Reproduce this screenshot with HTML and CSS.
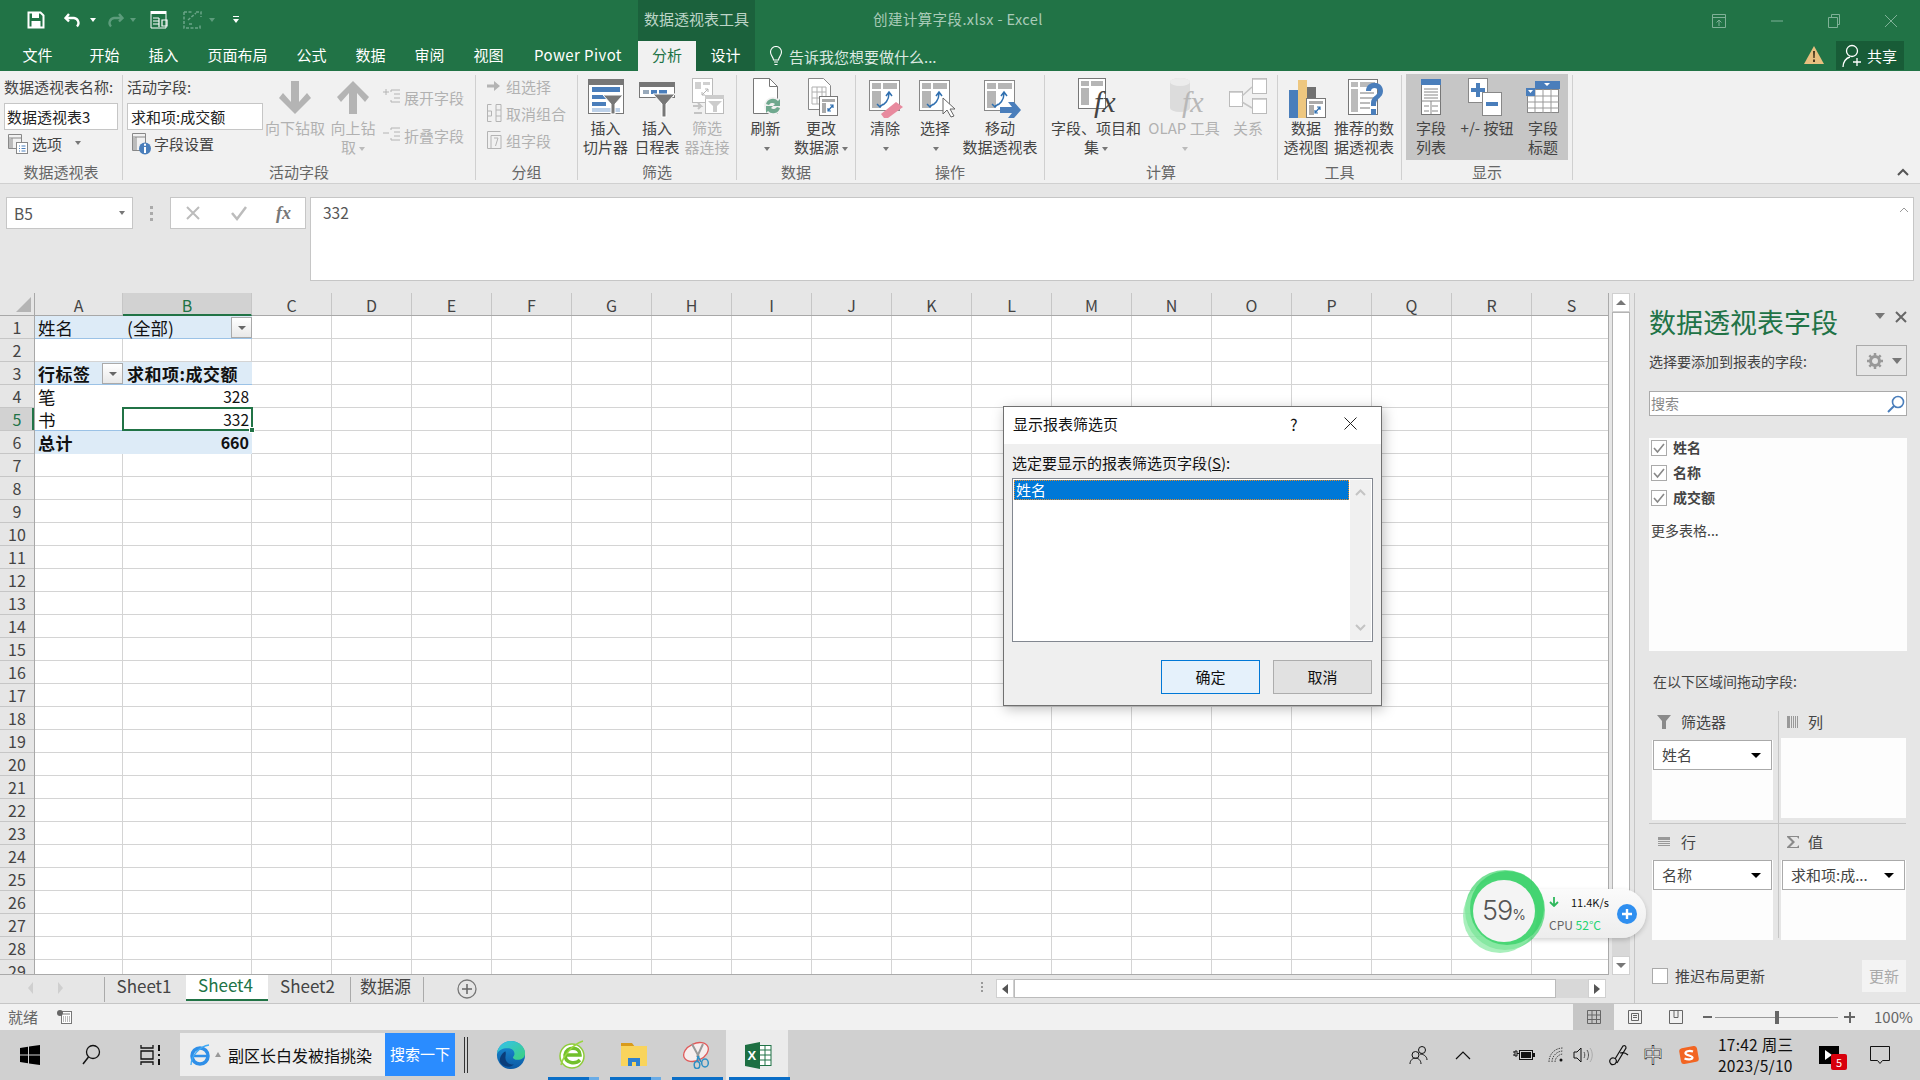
FILE: index.html
```html
<!DOCTYPE html>
<html lang="zh-CN">
<head>
<meta charset="utf-8">
<title>创建计算字段.xlsx - Excel</title>
<link rel="stylesheet" href="styles.css">
</head>
<body>
<div class="app">
  <header class="titlebar">
    <div class="qat">
      <svg width="18" height="18" viewBox="0 0 18 18"><path d="M1.5 1.5h12l3 3v12h-15z" fill="none" stroke="#fff" stroke-width="2"/><rect x="5" y="2" width="7" height="5" fill="#fff"/><rect x="4.500" y="10" width="9" height="6" fill="#fff"/></svg>
      <svg class="q-undo" width="20" height="18" viewBox="0 0 20 18"><path d="M5 3 1.500 7 5 10.500M2 7h8a5 5 0 0 1 3 8.500" fill="none" stroke="#fff" stroke-width="2.400"/></svg>
      <i class="qcaret"></i>
      <svg class="q-redo" width="20" height="18" viewBox="0 0 20 18"><path d="M15 3l3.500 4L15 10.500M18 7h-8a5 5 0 0 0-3 8.500" fill="none" stroke="#5d9c7c" stroke-width="2.400"/></svg>
      <i class="qcaret dim"></i>
      <svg class="q-form" width="20" height="20" viewBox="0 0 20 20"><rect x="1.500" y="1" width="16" height="3" fill="#fff"/><path d="M2 4v14h15V4" fill="none" stroke="#fff"/><path d="M4 8h6M4 11h6M4 14h6M10 8v9M13 10h5v6h-5z" stroke="#fff" fill="none" stroke-width="1.200"/></svg>
      <svg class="q-dash" width="20" height="18" viewBox="0 0 20 18"><path d="M1 1h8M13 1h5v5M1 1v16h16v-4M5 9l8-7M6 13h4" fill="none" stroke="#6aa588" stroke-width="1.500" stroke-dasharray="3 1.500"/></svg>
      <i class="qcaret dim"></i>
      <svg class="q-more" width="8" height="10" viewBox="0 0 8 10"><path d="M1 1.500h6" stroke="#fff"/><path d="M1 4h6L4 8z" fill="#fff"/></svg>
    </div>
    <div class="ctx-title">数据透视表工具</div>
    <div class="doc-title">创建计算字段.xlsx - Excel</div>
    <div class="winctl">
      <svg width="16" height="16" viewBox="0 0 16 16"><path d="M1.500 1.500h13v13h-13zM1.500 4.500h13M8 13V7M5.500 9.500 8 7l2.500 2.500" fill="none" stroke="#7fb197"/></svg>
      <svg width="14" height="16" viewBox="0 0 14 16"><path d="M1 8h12" stroke="#7fb197"/></svg>
      <svg width="14" height="16" viewBox="0 0 14 16"><path d="M1.500 4.500h9v10h-9zM4.500 4.500v-3h8v10h-2" fill="none" stroke="#7fb197"/></svg>
      <svg width="14" height="16" viewBox="0 0 14 16"><path d="M1 2l12 12M13 2 1 14" stroke="#7fb197"/></svg>
    </div>
  </header>
  <nav class="tabs">
    <span class="tab w75">文件</span>
    <span class="tab w59">开始</span>
    <span class="tab w59">插入</span>
    <span class="tab w89">页面布局</span>
    <span class="tab w59">公式</span>
    <span class="tab w59">数据</span>
    <span class="tab w59">审阅</span>
    <span class="tab w59">视图</span>
    <span class="tab w120 pp">Power Pivot</span>
    <span class="tab w58 active">分析</span>
    <span class="tab w59 ctx">设计</span>
    <span class="tellme">
      <svg width="14" height="21" viewBox="0 0 14 21"><path d="M4.500 14c0-3-3-4-3-8a5.500 5.500 0 0 1 11 0c0 4-3 5-3 8zM5 16h4M5.500 18.500h3" fill="none" stroke="#fff" stroke-width="1.100"/></svg>
      告诉我您想要做什么...
    </span>
    <span class="tab-right">
      <svg width="20" height="18" viewBox="0 0 20 18"><path d="M10 0 20 18H0z" fill="#e8bf7f"/><path d="M9 5h2l-.300 7H9.300zM9 13.500h2V16H9z" fill="#4a3a1f"/></svg>
      <span class="share">
        <svg width="20" height="24" viewBox="0 0 20 24"><circle cx="10" cy="7" r="5.500" fill="none" stroke="#fff" stroke-width="1.300"/><path d="M1 23c0-5 3-9 7-10M11 18h8M15 14v8" fill="none" stroke="#fff" stroke-width="1.300"/></svg>
        共享
      </span>
    </span>
  </nav>

  <section class="ribbon">
    <div class="group g1">
      <div class="gbody stack-a">
        <div class="lbl">数据透视表名称:</div>
        <div class="rinput">数据透视表3</div>
        <div class="irow">
          <svg width="22" height="21" viewBox="0 0 22 21"><path d="M1.500 1.500h13v14h-13zM1.500 5h13M5 5v10" fill="none" stroke="#888"/><rect x="2" y="6" width="3" height="9" fill="#bbb"/><rect x="9.500" y="9.500" width="11" height="11" fill="#fff" stroke="#888"/><path d="M12 13h1M12 15.500h1M12 18h1M14.500 13h4M14.500 15.500h4M14.500 18h4" stroke="#4a7ebb"/></svg>
          <span>选项</span><i class="caret c-opt"></i>
        </div>
      </div>
      <div class="glabel">数据透视表</div>
    </div>

    <div class="group g2">
      <div class="gbody row">
        <div class="stack-b">
          <div class="lbl">活动字段:</div>
          <div class="rinput wide">求和项:成交额</div>
          <div class="irow in">
            <svg width="20" height="23" viewBox="0 0 20 23"><path d="M1.500 1.500h13v17h-13zM1.500 5h13M5 5v13" fill="none" stroke="#888"/><rect x="2" y="6" width="3" height="12" fill="#bbb"/><circle cx="14" cy="16.500" r="6" fill="#4a7ebb"/><path d="M13 15h2v6h-2zM13 11.800h2v2h-2z" fill="#fff"/></svg>
            <span>字段设置</span>
          </div>
        </div>
        <div class="big off w60">
          <svg class="ic" width="44" height="43" viewBox="0 0 44 43"><path d="M18 6h8v21l8-9 4 5-16 16L6 23l4-5 8 9z" fill="#b4b4b4"/></svg>
          <span>向下钻取</span>
        </div>
        <div class="big off w56">
          <svg class="ic" width="44" height="43" viewBox="0 0 44 43"><path d="M18 39h8V18l8 9 4-5L22 6 6 22l4 5 8-9z" fill="#b4b4b4"/></svg>
          <span>向上钻<br>取<i class="caret"></i></span>
        </div>
        <div class="stack-c off">
          <div class="irow2">
            <svg width="18" height="18" viewBox="0 0 18 18"><path d="M0 4h6M3 1v6M8 2h9M11 6h6M11 10h6M8 14h9M8 2v2M8 12v2" stroke="#b4b4b4" fill="none"/></svg>
            <span>展开字段</span>
          </div>
          <div class="irow2 second">
            <svg width="18" height="18" viewBox="0 0 18 18"><path d="M0 7h6M8 2h9M11 6h6M11 10h6M8 14h9M8 2v2M8 12v2" stroke="#b4b4b4" fill="none"/></svg>
            <span>折叠字段</span>
          </div>
        </div>
      </div>
      <div class="glabel">活动字段</div>
    </div>

    <div class="group g3">
      <div class="gbody stack-d off">
        <div class="irow3">
          <svg width="16" height="16" viewBox="0 0 16 16"><path d="M1 6.500h7V3l6 5-6 5V9.500H1z" fill="#b4b4b4"/></svg>
          <span>组选择</span>
        </div>
        <div class="irow3">
          <svg width="16" height="20" viewBox="0 0 16 20"><path d="M5.500 1.500h-4v17h4M10 1.500h5v17h-5zM10 7h5M10 13h5M1.500 8h4v5h-4z" fill="none" stroke="#b4b4b4"/></svg>
          <span>取消组合</span>
        </div>
        <div class="irow3">
          <svg width="16" height="20" viewBox="0 0 16 20"><path d="M1.500 1.500h13M1.500 1.500v17h4M5 5.500h10v13H5z" fill="none" stroke="#b4b4b4"/><path d="M8 8h4l-2.500 8" fill="none" stroke="#b4b4b4"/></svg>
          <span>组字段</span>
        </div>
      </div>
      <div class="glabel">分组</div>
    </div>

    <div class="group g4">
      <div class="gbody row pl1">
        <div class="big w53">
          <svg class="ic" width="44" height="43" viewBox="0 0 44 43"><rect x="4.500" y="4.500" width="35" height="34" fill="#fff" stroke="#777"/><rect x="4" y="4" width="36" height="6" fill="#777"/><rect x="8" y="12" width="28" height="5" fill="#4a7ebb"/><rect x="8" y="20" width="14" height="4" fill="#4a7ebb"/><rect x="8" y="27" width="14" height="4" fill="#4a7ebb"/><rect x="8" y="33" width="28" height="4" fill="#bcd0e8"/><path d="M19 20h20l-8 9v10h-4V29z" fill="#777" stroke="#fff"/></svg>
          <span>插入<br>切片器</span>
        </div>
        <div class="big w50">
          <svg class="ic" width="44" height="43" viewBox="0 0 44 43"><rect x="4.500" y="7.500" width="35" height="15" fill="#fff" stroke="#777"/><rect x="4" y="7" width="36" height="5" fill="#777"/><rect x="8" y="15" width="6" height="4" fill="#9ab"/><rect x="16" y="15" width="6" height="4" fill="#4a7ebb"/><rect x="24" y="15" width="8" height="4" fill="#4a7ebb"/><path d="M18 19h22l-9 10v13h-4V29z" fill="#777" stroke="#fff"/></svg>
          <span>插入<br>日程表</span>
        </div>
        <div class="big off w50">
          <svg class="ic" width="44" height="43" viewBox="0 0 44 43"><rect x="7.500" y="3.500" width="20" height="24" fill="#fff" stroke="#bbb"/><path d="M10 7h6v7h-6zM18 7h7v3h-7z" fill="#d0d0d0"/><path d="M17 20l6-6M20 14h3v3M17 17v3h3" fill="none" stroke="#b4b4b4"/><rect x="20.500" y="20.500" width="18" height="18" fill="#fff" stroke="#bbb"/><rect x="20" y="20" width="19" height="4" fill="#ccc"/><path d="M23 26h14l-5 5v6h-4v-6z" fill="#ccc"/><path d="M8 31h8l-3-3M16 31l-3 3M9 38h8" fill="none" stroke="#c4c4c4" stroke-width="2"/></svg>
          <span>筛选<br>器连接</span>
        </div>
      </div>
      <div class="glabel">筛选</div>
    </div>

    <div class="group g5">
      <div class="gbody row">
        <div class="big w57">
          <svg class="ic" width="44" height="43" viewBox="0 0 44 43"><path d="M9.500 3.500h16l8 8v27h-24z" fill="#fff" stroke="#777"/><path d="M25.500 3.500v8h8" fill="none" stroke="#777"/><circle cx="29" cy="31" r="9" fill="#f1f1f1"/><path d="M22 29a7 7 0 0 1 12-3l2-2v7h-7l2-2a4 4 0 0 0-6 1zM36 33a7 7 0 0 1-12 3l-2 2v-7h7l-2 2a4 4 0 0 0 6-1z" fill="#6fa88e"/></svg>
          <span>刷新<br><i class="caret"></i></span>
        </div>
        <div class="big w54">
          <svg class="ic" width="44" height="43" viewBox="0 0 44 43"><path d="M9.500 3.500h15l7 7v24h-22z" fill="#fff" stroke="#888"/><path d="M13 12h14v17H13zM13 17h14M13 23h14M18 12v17M23 12v17" fill="none" stroke="#b0b0b0"/><rect x="20.500" y="21.500" width="18" height="19" fill="#fff" stroke="#777"/><path d="M23 24h13v3H23zM23 28h4v10h-4z" fill="#aaa"/><path d="M29 36l5-6M31 30h3v3M29 33v3h3" fill="none" stroke="#2f6fb0" stroke-width="1.200"/></svg>
          <span>更改<br>数据源<i class="caret"></i></span>
        </div>
      </div>
      <div class="glabel">数据</div>
    </div>

    <div class="group g6">
      <div class="gbody row">
        <div class="big w58">
          <svg class="ic" width="44" height="43" viewBox="0 0 44 43"><rect x="6.500" y="5.500" width="30" height="30" fill="#fff" stroke="#888"/><path d="M9 8h9v6H9zM20 8h14v6H20zM9 16h9v17H9z" fill="#b5b5b5"/><path d="M17 31c5-1 9-6 9-13M23 21l3-4 3 4M14 29l3 3 3-3" fill="none" stroke="#2f6fb0" stroke-width="1.500"/><path d="M18 39 33 27l7 5-15 11h-4z" fill="#e88a9e"/></svg>
          <span>清除<br><i class="caret"></i></span>
        </div>
        <div class="big w42">
          <svg class="ic" width="44" height="43" viewBox="0 0 44 43"><rect x="6.500" y="5.500" width="30" height="30" fill="#fff" stroke="#888"/><path d="M9 8h9v6H9zM20 8h14v6H20zM9 16h9v17H9z" fill="#b5b5b5"/><path d="M17 31c5-1 9-6 9-13M23 21l3-4 3 4M14 29l3 3 3-3" fill="none" stroke="#2f6fb0" stroke-width="1.500"/><path d="M30 23v16l4-4 4 7 3-1-4-7h5z" fill="#fff" stroke="#666"/></svg>
          <span>选择<br><i class="caret"></i></span>
        </div>
        <div class="big w88">
          <svg class="ic" width="44" height="43" viewBox="0 0 44 43"><rect x="6.500" y="5.500" width="30" height="30" fill="#fff" stroke="#888"/><path d="M9 8h9v6H9zM20 8h14v6H20zM9 16h9v17H9z" fill="#b5b5b5"/><path d="M17 31c5-1 9-6 9-13M23 21l3-4 3 4M14 29l3 3 3-3" fill="none" stroke="#2f6fb0" stroke-width="1.500"/><path d="M22 32h12l-4-5h6l7 8-7 8h-6l4-5H22z" fill="#4a7ebb"/></svg>
          <span>移动<br>数据透视表</span>
        </div>
      </div>
      <div class="glabel">操作</div>
    </div>

    <div class="group g7">
      <div class="gbody row">
        <div class="big w102">
          <svg class="ic" width="44" height="43" viewBox="0 0 44 43"><rect x="4.500" y="3.500" width="27" height="30" fill="#fff" stroke="#777"/><path d="M7 6h8v5H7zM17 6h12v5H17zM7 13h8v17H7z" fill="#b5b5b5"/><text x="20" y="37" class="fxbig">fx</text></svg>
          <span>字段、项目和<br>集<i class="caret"></i></span>
        </div>
        <div class="big off w74">
          <svg class="ic" width="44" height="43" viewBox="0 0 44 43"><path d="M8 7a10 4 0 0 1 20 0v26a10 4 0 0 1-20 0z" fill="#dcdcdc"/><ellipse cx="18" cy="7" rx="10" ry="4" fill="#ececec"/><text x="20" y="37" class="fxbig dim">fx</text></svg>
          <span>OLAP 工具<br><i class="caret"></i></span>
        </div>
        <div class="big off w54">
          <svg class="ic" width="44" height="43" viewBox="0 0 44 43"><rect x="3.500" y="16.500" width="13" height="15" fill="#fff" stroke="#bbb"/><rect x="26.500" y="3.500" width="14" height="15" fill="#fff" stroke="#bbb"/><rect x="26.500" y="23.500" width="14" height="15" fill="#fff" stroke="#bbb"/><path d="M16 21l10-9M16 27l10 6M4 17h12M27 4h13M27 24h13" stroke="#c4c4c4" stroke-width="1.500" fill="none"/></svg>
          <span>关系</span>
        </div>
      </div>
      <div class="glabel">计算</div>
    </div>

    <div class="group g8">
      <div class="gbody row">
        <div class="big w56">
          <svg class="ic" width="44" height="43" viewBox="0 0 44 43"><rect x="5" y="15" width="9" height="28" fill="#4a7ebb"/><rect x="14" y="5" width="9" height="38" fill="#eec77f"/><rect x="23" y="12" width="9" height="12" fill="#707070"/><rect x="22.500" y="23.500" width="19" height="19" fill="#fff" stroke="#777"/><path d="M25 26h14v3H25zM25 30h5v10h-5z" fill="#aaa"/><path d="M31 38l5-6M33 32h3v3M31 35v3h3" fill="none" stroke="#2f6fb0" stroke-width="1.200"/></svg>
          <span>数据<br>透视图</span>
        </div>
        <div class="big w60">
          <svg class="ic" width="44" height="43" viewBox="0 0 44 43"><rect x="6.500" y="4.500" width="29" height="35" fill="#fff" stroke="#777"/><path d="M9 7h7v5H9zM18 7h15v5H18zM9 14h7v23H9z" fill="#bbb"/><path d="M18 18h14M18 23h14M18 28h10M18 33h10" stroke="#bbb" stroke-width="2"/><path d="M24 16c0-11 17-11 17 0 0 7-7 7-7 13v2h-5v-3c0-7 7-7 7-12 0-4-7-4-7 0z" fill="#4a7ebb"/><rect x="29" y="34" width="5" height="6" fill="#4a7ebb"/></svg>
          <span>推荐的数<br>据透视表</span>
        </div>
      </div>
      <div class="glabel">工具</div>
    </div>

    <div class="group g9">
      <div class="gbody row shown">
        <div class="big w50">
          <svg class="ic" width="44" height="43" viewBox="0 0 44 43"><rect x="12.500" y="4.500" width="19" height="35" fill="#fff" stroke="#777"/><rect x="12" y="4" width="20" height="6" fill="#4a7ebb"/><path d="M15 14h14M15 17h14M15 20h14M15 23h14M12 26h20M15 31h5M23 31h6M15 36h5M23 36h6M22 26v13" stroke="#888" fill="none"/></svg>
          <span>字段<br>列表</span>
        </div>
        <div class="big w62">
          <svg class="ic" width="44" height="43" viewBox="0 0 44 43"><rect x="3.500" y="3.500" width="19" height="24" fill="#fff" stroke="#888"/><path d="M11 8h4v5h5v4h-5v5h-4v-5H6v-4h5z" fill="#4a7ebb"/><rect x="17.500" y="17.500" width="19" height="23" fill="#fff" stroke="#888"/><rect x="21" y="27" width="12" height="4" fill="#4a7ebb"/></svg>
          <span>+/- 按钮</span>
        </div>
        <div class="big w50">
          <svg class="ic" width="44" height="43" viewBox="0 0 44 43"><rect x="6.500" y="14.500" width="31" height="23" fill="#fff" stroke="#888"/><path d="M6 21h32M6 27h32M6 33h32M14 14v24M22 14v24M30 14v24" stroke="#999"/><rect x="14" y="6" width="25" height="8" fill="#4a7ebb"/><rect x="5" y="13" width="9" height="8" fill="#4a7ebb"/><path d="M23 8h6l-3 3zM7 15h5l-2.500 3z" fill="#fff"/></svg>
          <span>字段<br>标题</span>
        </div>
      </div>
      <div class="glabel">显示</div>
    </div>

    <svg class="collapse" width="12" height="8" viewBox="0 0 12 8"><path d="M1 7l5-5 5 5" fill="none" stroke="#555" stroke-width="2"/></svg>
  </section>

  <section class="formula">
    <div class="namebox"><span>B5</span><i class="caret"></i></div>
    <div class="fdots"><i></i><i></i><i></i></div>
    <div class="fxbox">
      <svg width="18" height="18" viewBox="0 0 18 18"><path d="M3 3l12 12M15 3 3 15" stroke="#bcbcbc" stroke-width="2"/></svg>
      <svg width="18" height="18" viewBox="0 0 18 18"><path d="M2 9l5 6L16 3" fill="none" stroke="#bcbcbc" stroke-width="2.500"/></svg>
      <span class="fxt">fx</span>
    </div>
    <div class="finput">332<svg class="fup" width="10" height="6" viewBox="0 0 10 6"><path d="M1 5l4-4 4 4" fill="none" stroke="#999"/></svg></div>
  </section>

  <main class="main">
    <div class="sheetarea">
      <div class="sheetrow">
        <div class="sheet">
          <div class="colhead">
            <div class="corner"><i></i></div>
            <span class="ca">A</span><span class="cb sel">B</span>
            <span>C</span><span>D</span><span>E</span><span>F</span><span>G</span><span>H</span><span>I</span><span>J</span><span>K</span><span>L</span><span>M</span><span>N</span><span>O</span><span>P</span><span>Q</span><span>R</span><span>S</span>
          </div>
          <div class="body">
            <div class="rowhead">
              <span>1</span><span>2</span><span>3</span><span>4</span><span class="sel">5</span><span>6</span><span>7</span><span>8</span><span>9</span><span>10</span><span>11</span><span>12</span><span>13</span><span>14</span><span>15</span><span>16</span><span>17</span><span>18</span><span>19</span><span>20</span><span>21</span><span>22</span><span>23</span><span>24</span><span>25</span><span>26</span><span>27</span><span>28</span><span>29</span>
            </div>
            <div class="col ca">
              <div class="cell hd">姓名</div>
              <div class="cell"></div>
              <div class="cell hd bold">行标签<span class="fbtn"><i></i></span></div>
              <div class="cell plain">笔</div>
              <div class="cell plain hd-line">书</div>
              <div class="cell tot bold">总计</div>
            </div>
            <div class="col cb">
              <div class="cell hd">(全部)<span class="fbtn"><i></i></span></div>
              <div class="cell"></div>
              <div class="cell hd bold">求和项:成交额</div>
              <div class="cell plain num">328</div>
              <div class="cell plain num hd-line active">332</div>
              <div class="cell tot bold num">660</div>
            </div>
            <div class="col"></div><div class="col"></div><div class="col"></div><div class="col"></div><div class="col"></div><div class="col"></div><div class="col"></div><div class="col"></div><div class="col"></div><div class="col"></div><div class="col"></div><div class="col"></div><div class="col"></div><div class="col"></div><div class="col"></div><div class="col"></div><div class="col"></div>
          </div>
        </div>
        <div class="vscroll">
          <div class="sbtn"><i class="up"></i></div>
          <div class="vthumb"></div>
          <div class="sbtn"><i class="down"></i></div>
        </div>
      </div>
      <div class="sheettabs">
        <div class="navarrows">
          <svg width="8" height="14" viewBox="0 0 8 14"><path d="M6 1 1 7l5 6z" fill="#cfcfcf"/></svg>
          <svg width="8" height="14" viewBox="0 0 8 14"><path d="M2 1l5 6-5 6z" fill="#cfcfcf"/></svg>
        </div>
        <span class="stab">Sheet1</span>
        <span class="stab on">Sheet4</span>
        <span class="stab">Sheet2</span>
        <span class="stab narrow">数据源</span>
        <svg class="addsheet" width="20" height="20" viewBox="0 0 20 20"><circle cx="10" cy="10" r="9" fill="none" stroke="#777" stroke-width="1.300"/><path d="M10 5v10M5 10h10" stroke="#666" stroke-width="1.500"/></svg>
        <div class="hdots"><i></i><i></i><i></i></div>
        <div class="hscroll">
          <div class="hbtn"><i class="left"></i></div>
          <div class="hthumb"></div>
          <div class="hbtn"><i class="right"></i></div>
        </div>
      </div>
    </div>

    <aside class="pane">
      <div class="pane-head">
        <h1>数据透视表字段</h1>
        <i class="pcaret"></i>
        <svg width="12" height="12" viewBox="0 0 12 12"><path d="M1 1l10 10M11 1 1 11" stroke="#666" stroke-width="2"/></svg>
      </div>
      <div class="pane-sub">
        <span>选择要添加到报表的字段:</span>
        <div class="gearbox">
          <svg width="16" height="16" viewBox="0 0 16 16"><circle cx="8" cy="8" r="4.500" fill="none" stroke="#999" stroke-width="3"/><path d="M8 0v3M8 13v3M0 8h3M13 8h3M2.300 2.300l2 2M11.700 11.700l2 2M13.700 2.300l-2 2M4.300 11.700l-2 2" stroke="#999" stroke-width="2.500"/></svg>
          <i class="pcaret"></i>
        </div>
      </div>
      <div class="psearch">
        <span>搜索</span>
        <svg width="18" height="18" viewBox="0 0 18 18"><circle cx="11" cy="7" r="5.500" fill="none" stroke="#4a7ebb" stroke-width="1.600"/><path d="M7 11l-6 6" stroke="#4a7ebb" stroke-width="2"/></svg>
      </div>
      <div class="plist">
        <label class="pitem"><span class="chk"><svg width="12" height="12" viewBox="0 0 12 12"><path d="M1 6l3.500 4L11 2" fill="none" stroke="#888" stroke-width="1.600"/></svg></span>姓名</label>
        <label class="pitem"><span class="chk"><svg width="12" height="12" viewBox="0 0 12 12"><path d="M1 6l3.500 4L11 2" fill="none" stroke="#888" stroke-width="1.600"/></svg></span>名称</label>
        <label class="pitem"><span class="chk"><svg width="12" height="12" viewBox="0 0 12 12"><path d="M1 6l3.500 4L11 2" fill="none" stroke="#888" stroke-width="1.600"/></svg></span>成交额</label>
        <div class="pmore">更多表格...</div>
      </div>
      <div class="pdrag">在以下区域间拖动字段:</div>
      <div class="zones">
        <div class="zone z-l z-t">
          <div class="zhead"><svg width="14" height="14" viewBox="0 0 14 14"><path d="M0 0h14L9 6v8H5V6z" fill="#8a8a8a"/></svg><span>筛选器</span></div>
          <div class="zbox"><div class="chip">姓名<i></i></div></div>
        </div>
        <div class="zone z-t">
          <div class="zhead"><svg width="14" height="14" viewBox="0 0 14 14"><path d="M1 1h3v12H1zM5 1h1v12H5zM7 1h1v12H7zM9 1h1v12H9zM11 1h1v12h-1z" fill="#999"/></svg><span>列</span></div>
          <div class="zbox"></div>
        </div>
        <div class="zone z-l z-b">
          <div class="zhead"><svg width="14" height="14" viewBox="0 0 14 14"><path d="M1 2h12v3H1zM1 6h12v1H1zM1 8h12v1H1zM1 10h12v1H1z" fill="#999"/></svg><span>行</span></div>
          <div class="zbox"><div class="chip">名称<i></i></div></div>
        </div>
        <div class="zone z-b">
          <div class="zhead"><svg width="14" height="14" viewBox="0 0 14 14"><path d="M1 1h12v3L11 2H4l5 5-5 5h7l2-2v3H1v-1l5-5-5-5z" fill="#8a8a8a"/></svg><span>值</span></div>
          <div class="zbox"><div class="chip">求和项:成...<i></i></div></div>
        </div>
      </div>
      <div class="pfoot">
        <span class="chk big-chk"></span>
        <span class="defer">推迟布局更新</span>
        <span class="update">更新</span>
      </div>
    </aside>
  </main>

  <footer class="statusbar">
    <span class="ready">就绪</span>
    <svg class="macro" width="15" height="14" viewBox="0 0 15 14"><rect x="4.500" y="1.500" width="10" height="12" fill="#fff" stroke="#777"/><circle cx="3" cy="3" r="3" fill="#666"/><path d="M6 4h7M6 7h1M8 7h1M10 7h1M12 7h1M6 9h1M8 9h1M10 9h1M12 9h1M6 11h1M8 11h1M10 11h1M12 11h1" stroke="#777"/></svg>
    <div class="views">
      <span class="vbtn on"><svg width="14" height="14" viewBox="0 0 14 14"><path d="M.5.5h13v13H.5zM5 .5v13M9.500.5v13M.5 5h13M.5 9.500h13" fill="none" stroke="#666"/></svg></span>
      <span class="vbtn"><svg width="14" height="14" viewBox="0 0 14 14"><path d="M.5.5h13v13H.5zM3.500 3.500h7v7h-7zM5 5.500h4M5 7.500h4" fill="none" stroke="#666"/></svg></span>
      <span class="vbtn"><svg width="14" height="14" viewBox="0 0 14 14"><path d="M.5.5h13v13H.5zM5 .5v7h4v-7" fill="none" stroke="#666"/></svg></span>
    </div>
    <div class="zoomer">
      <i class="zm"></i>
      <div class="ztrack"><i></i></div>
      <i class="zp"></i>
    </div>
    <span class="zpct">100%</span>
  </footer>

  <div class="taskbar">
    <div class="tb-item w60">
      <svg width="20" height="20" viewBox="0 0 20 20"><path d="M0 3l8-1.200V9.500H0zM9 1.600 20 0v9.500H9zM0 10.500h8v7.700L0 17zM9 10.500h11V20L9 18.400z" fill="#000"/></svg>
    </div>
    <div class="tb-item w62">
      <svg width="20" height="22" viewBox="0 0 20 22"><circle cx="12" cy="8" r="6.500" fill="none" stroke="#111" stroke-width="1.300"/><path d="M7.500 13 2 20" stroke="#111" stroke-width="1.500"/></svg>
    </div>
    <div class="tb-item w58">
      <svg width="22" height="22" viewBox="0 0 22 22"><path d="M1 1v3h12V1M1 21v-3h12v3M1 7h12v8H1z" fill="none" stroke="#111" stroke-width="1.300"/><path d="M19 1v6M19 10v2M19 15v6" stroke="#111" stroke-width="2"/></svg>
    </div>
    <div class="tb-search">
      <svg width="22" height="22" viewBox="0 0 22 22"><circle cx="11" cy="12" r="8" fill="none" stroke="#2f8fe8" stroke-width="3.500"/><path d="M5 12h13" stroke="#2f8fe8" stroke-width="2.500"/><path d="M2 21C2 12 11 2 20 1" fill="none" stroke="#3fa9f5" stroke-width="1.300"/></svg>
      <i class="tri"></i>
      <span class="news">副区长白发被指挑染</span>
      <span class="go">搜索一下</span>
    </div>
    <div class="tb-bars"><i></i><i></i></div>
    <div class="tb-item app-ic">
      <svg width="30" height="30" viewBox="0 0 32 32"><defs><linearGradient id="edge1" x1="0" y1="0" x2="1" y2="1"><stop offset="0" stop-color="#35c1f1"/><stop offset="1" stop-color="#3bd17c"/></linearGradient><linearGradient id="edge2" x1="0" y1="0" x2="0" y2="1"><stop offset="0" stop-color="#1b8fd6"/><stop offset="1" stop-color="#0c59a4"/></linearGradient></defs><circle cx="16" cy="16" r="15" fill="url(#edge2)"/><path d="M1 15C2 5 10 1 16 1c8 0 15 6 15 13 0 5-4 7-8 7-3 0-5-1-5-3 3-2 2-8-3-9C9 8 3 10 1 15z" fill="url(#edge1)"/><path d="M10 19c0 5 5 8 9 7-5 5-13 2-15-3 0-6 3-9 6-11 1 3 0 5 0 7z" fill="#0a3d7a"/></svg>
    </div>
    <div class="tb-item app-ic">
      <svg width="26" height="30" viewBox="0 0 26 30"><ellipse cx="13" cy="16" rx="12" ry="12" fill="#fff" stroke="#8ecb3a" stroke-width="1.500"/><path d="M5 15h16c0-9-14-9-15 0 0 8 10 10 15 5" fill="none" stroke="#72c02c" stroke-width="3.500"/><path d="M2 25C4 16 14 4 24 1" fill="none" stroke="#9ad53f" stroke-width="1.500"/></svg>
    </div>
    <div class="tb-item app-ic">
      <svg width="28" height="24" viewBox="0 0 28 24"><path d="M1 0h11l3 4H1z" fill="#d99b1b"/><rect x="1" y="3" width="26" height="20" fill="#f9d45c"/><path d="M8 23v-8h12v8h-4v-4h-4v4z" fill="#2f80cf"/></svg>
    </div>
    <div class="tb-item app-ic">
      <svg class="scis" width="28" height="28" viewBox="0 0 28 28"><ellipse cx="13" cy="11" rx="13" ry="8.500" transform="rotate(-25 13 11)" fill="#f6eeee" stroke="#e05a5a" stroke-width="1.300"/><path d="M9 3l7 13M20 3l-6 13" stroke="#999" stroke-width="2"/><path d="M15 15l3 6M15 15l-1 6" stroke="#2f8fc4" stroke-width="1.600"/><ellipse cx="14" cy="24" rx="2.800" ry="3.500" fill="none" stroke="#2f8fc4" stroke-width="1.500"/><ellipse cx="22" cy="22" rx="3.300" ry="4" fill="none" stroke="#2f8fc4" stroke-width="1.500"/></svg>
    </div>
    <div class="tb-item app-ic cur">
      <svg class="xlic" width="27" height="27" viewBox="0 0 27 27"><rect x="10" y="3.500" width="16" height="20" fill="#fff" stroke="#217346"/><path d="M15 8h11M15 13h11M15 18h11M20 3.500v20" stroke="#217346"/><path d="M0 3 15 0v27L0 24z" fill="#1d6f42"/><text x="2.500" y="18" class="xl">X</text></svg>
    </div>
    <div class="tb-underlines"><i class="u1"></i><i class="u1b"></i><i class="u2"></i><i class="u2b"></i><i class="u3"></i><i class="u4"></i></div>
    <div class="tray">
      <span class="t44"><svg width="20" height="20" viewBox="0 0 20 20"><circle cx="13" cy="5" r="3.500" fill="none" stroke="#111"/><circle cx="6.500" cy="10" r="3.500" fill="none" stroke="#111"/><path d="M1 19c0-4 3-6 5.500-6s5.500 2 5.500 6M11 9c3 0 7 2 7 6" fill="none" stroke="#111"/></svg></span>
      <span class="t44"><svg width="16" height="9" viewBox="0 0 16 9"><path d="M1 8l7-7 7 7" fill="none" stroke="#111" stroke-width="1.200"/></svg></span>
      <span class="t22"></span>
      <span class="t34"><svg width="22" height="12" viewBox="0 0 22 12"><path d="M0 3h2M0 6h2" stroke="#111"/><path d="M2 2h2v5H2zM4 4.500h2" fill="none" stroke="#111"/><rect x="6.500" y="1.500" width="13" height="9" fill="none" stroke="#111"/><rect x="8" y="3" width="10" height="6" fill="#111"/><rect x="20" y="4" width="2" height="4" fill="#111"/></svg></span>
      <span class="t30"><svg width="16" height="16" viewBox="0 0 16 16"><path d="M1 15C1 7 7 1 15 1M4 15c0-6 5-11 11-11M7 15c0-4 4-8 8-8" fill="none" stroke="#444" stroke-dasharray="1.500 1"/><circle cx="13" cy="13" r="1.500" fill="#111"/></svg></span>
      <span class="t24"><svg width="20" height="16" viewBox="0 0 20 16"><path d="M1 5h3l4-4v14l-4-4H1z" fill="none" stroke="#111"/><path d="M11 5c1 2 1 4 0 6M14 3c2 3 2 7 0 10" fill="none" stroke="#555"/><path d="M17 1c3 4 3 10 0 14" fill="none" stroke="#aaa"/></svg></span>
      <span class="t6"></span>
      <span class="t36"><svg width="20" height="22" viewBox="0 0 20 22"><path d="M2 20c-3-3 0-7 3-6 3 1 3 4 1 6-2 1-3 1-4 0zM6 15 14 2c2-1 3 0 3 2L8 19M11 9c3-1 6 0 8 2" fill="none" stroke="#111" stroke-width="1.200"/></svg></span>
      <span class="t32 ime">中</span>
      <span class="t40"><svg width="20" height="20" viewBox="0 0 20 20"><rect x="1" y="2" width="18" height="16" rx="3" fill="#f26522" transform="rotate(-10 10 10)"/><path d="M14 6.500C10 5 6 6.500 6.500 8.500S13.500 10.500 13.500 12.500 9 15 5.500 13.500" fill="none" stroke="#fff" stroke-width="2.200"/></svg></span>
      <span class="clock">17:42 周三<br>2023/5/10</span>
      <span class="t44 vid"><svg width="20" height="18" viewBox="0 0 20 18"><rect width="20" height="18" fill="#000"/><path d="M6 4l7 5-7 5z" fill="#fff"/></svg><b>5</b></span>
      <span class="t58"><svg width="20" height="18" viewBox="0 0 20 18"><path d="M.5.500h19v14h-7l-2.500 3-2.500-3h-7z" fill="none" stroke="#111"/></svg></span>
    </div>
  </div>

  <div class="dialog">
    <div class="dlg-title">
      <span>显示报表筛选页</span>
      <span class="q">?</span>
      <svg width="13" height="13" viewBox="0 0 13 13"><path d="M.5.5l12 12M12.500.5l-12 12" stroke="#222"/></svg>
    </div>
    <div class="dlg-body">
      <div class="dlg-label">选定要显示的报表筛选页字段(<u>S</u>):</div>
      <div class="listbox">
        <div class="lb-items"><div class="lb-sel">姓名</div></div>
        <div class="lb-scroll">
          <svg width="11" height="7" viewBox="0 0 11 7"><path d="M1 6l4.500-4.500L10 6" fill="none" stroke="#c4c4c4" stroke-width="2"/></svg>
          <svg width="11" height="7" viewBox="0 0 11 7"><path d="M1 1l4.500 4.500L10 1" fill="none" stroke="#c4c4c4" stroke-width="2"/></svg>
        </div>
      </div>
      <div class="dlg-btns">
        <span class="btn primary">确定</span>
        <span class="btn">取消</span>
      </div>
    </div>
  </div>

  <div class="meter">
    <div class="m-pill">
      <div class="m-info">
        <div class="m-net"><svg width="10" height="10" viewBox="0 0 10 10"><path d="M5 0v8M1 5l4 4 4-4" fill="none" stroke="#2eb85c" stroke-width="1.800"/></svg><span>11.4K/s</span></div>
        <div class="m-cpu">CPU <em>52°C</em></div>
      </div>
      <span class="m-plus"><svg width="12" height="12" viewBox="0 0 12 12"><path d="M6 1v10M1 6h10" stroke="#fff" stroke-width="2.400"/></svg></span>
    </div>
    <div class="m-ring">
      <svg width="84" height="86" viewBox="0 0 84 86"><circle cx="42" cy="41" r="40" fill="#3ed46b" fill-opacity=".7"/><circle cx="37" cy="47" r="37" fill="#8ceaa6" fill-opacity=".75"/><circle cx="44" cy="39" r="37" fill="#2fcf63" fill-opacity=".7"/></svg>
      <div class="m-face">59<small>%</small></div>
    </div>
  </div>
</div>
</body>
</html>
```
FILE: styles.css
```css
* { box-sizing: border-box; }
html, body { margin: 0; padding: 0; }
body { font-family: "Noto Sans CJK SC", "Noto Sans", sans-serif; font-size: 15px; color: #333; background: #fff; }
i { display: block; font-style: normal; }
svg { display: block; flex: none; }

.app { width: 1920px; height: 1080px; position: relative; overflow: hidden; display: flex; flex-direction: column; }

/* title bar */
.titlebar { height: 41px; background: #217346; display: flex; align-items: stretch; flex: none; }
.qat { width: 638px; display: flex; align-items: center; padding: 0 0 2px 27px; }
.qat .q-undo { margin-left: 19px; }
.qcaret { width: 0; height: 0; border: 3px solid transparent; border-top: 4px solid #fff; border-bottom: 0; margin-left: 6px; }
.qcaret.dim { border-top-color: #5d9c7c; }
.q-redo { margin-left: 8px; }
.q-form { margin-left: 13px; }
.q-dash { margin-left: 14px; }
.q-more { margin-left: 17px; }
.ctx-title { width: 117px; background: #1b613c; color: #bdd5c7; font-size: 15px; line-height: 38px; text-align: center; white-space: nowrap; }
.doc-title { margin-left: 118px; color: #a9cbb8; font-size: 14.500px; letter-spacing: .4px; line-height: 38px; white-space: nowrap; }
.winctl { margin-left: auto; display: flex; align-items: center; padding-right: 22px; gap: 43px; }

/* tabs */
.tabs { height: 30px; background: #217346; display: flex; flex: none; color: #fff; font-size: 15px; }
.tab { text-align: center; line-height: 28px; white-space: nowrap; flex: none; }
.w75 { width: 75px; } .w59 { width: 59px; } .w89 { width: 89px; } .w120 { width: 120px; } .w58 { width: 58px; }
.tab.pp { letter-spacing: .4px; }
.tab.active { background: #f1f1f1; color: #217346; }
.tab.ctx { background: #1b613c; }
.tellme { margin-left: 14px; display: flex; align-items: center; gap: 6px; font-size: 15px; color: #dbe9e1; white-space: nowrap; }
.tab-right { margin-left: auto; display: flex; align-items: flex-start; padding-right: 16px; }
.tab-right > svg { margin-top: 5px; margin-right: 12px; }
.share { width: 68px; height: 29px; background: #185c37; display: flex; align-items: center; gap: 5px; padding-left: 6px; font-size: 15px; }

/* ribbon */
.ribbon { height: 113px; flex: none; background: #f1f1f1; border-bottom: 1px solid #d0d0d0; display: flex; padding-top: 4px; position: relative; font-size: 15px; line-height: 19px; color: #444; }
.group { height: 105px; border-right: 1px solid #d0d0d0; display: flex; flex-direction: column; flex: none; }
.gbody { height: 86px; flex: none; }
.glabel { text-align: center; color: #666; font-size: 15px; line-height: 22px; }
.g1 { width: 123px; } .g2 { width: 353px; } .g3 { width: 102px; } .g4 { width: 159px; } .g5 { width: 119px; } .g6 { width: 189px; } .g7 { width: 233px; } .g8 { width: 124px; } .g9 { width: 171px; }
.row { display: flex; }
.pl1 { padding-left: 1px; }
.off { color: #b1b1b1; }
.big { display: flex; flex-direction: column; align-items: center; text-align: center; white-space: nowrap; flex: none; }
.w60 { width: 60px; } .w56 { width: 56px; } .w53 { width: 53px; } .w50 { width: 50px; } .w57 { width: 57px; } .w54 { width: 54px; } .w42 { width: 42px; } .w88 { width: 88px; } .w102 { width: 102px; } .w74 { width: 74px; } .w62 { width: 62px; }
.caret { display: inline-block; width: 0; height: 0; border: 3px solid transparent; border-top: 4px solid #777; border-bottom: 0; margin-left: 4px; vertical-align: middle; }
.big .caret { margin-left: 3px; }
.off .caret { border-top-color: #bbb; }
.stack-a { padding: 2px 4px 0; }
.lbl { line-height: 20px; white-space: nowrap; }
.rinput { margin-top: 6px; height: 27px; width: 114px; background: #fff; border: 1px solid #c6c6c6; line-height: 25px; padding-left: 2px; color: #222; white-space: nowrap; overflow: hidden; }
.rinput.wide { width: 136px; padding-left: 3px; }
.irow { display: flex; align-items: center; height: 22px; margin-top: 2px; padding-left: 3px; gap: 3px; white-space: nowrap; }
.irow .c-opt { margin-left: 10px; }
.irow.in { padding-left: 4px; }
.stack-b { width: 142px; padding: 2px 0 0 4px; flex: none; }
.stack-c { padding: 12px 0 0 2px; flex: none; }
.irow2 { display: flex; align-items: center; height: 20px; gap: 3px; white-space: nowrap; }
.irow2.second { margin-top: 18px; }
.stack-d { padding: 1px 0 0 10px; display: flex; flex-direction: column; gap: 7px; }
.irow3 { display: flex; align-items: center; height: 20px; gap: 4px; white-space: nowrap; }
.irow3 svg { width: 16px; }
.gbody.shown { margin: -1px 4px 1px; background: #c6c6c6; height: 86px; width: 162px; color: #444; padding-top: 1px; }
.fxbig { font-family: "Liberation Serif", serif; font-style: italic; font-size: 30px; fill: #444; }
.fxbig.dim { fill: #b8b8b8; }
.collapse { position: absolute; right: 11px; bottom: 7px; }

/* formula bar */
.formula { height: 109px; flex: none; background: #e6e6e6; display: flex; align-items: flex-start; padding: 13px 6px 0 6px; }
.namebox { width: 127px; height: 32px; background: #fff; border: 1px solid #c6c6c6; display: flex; align-items: center; justify-content: space-between; padding: 0 7px; font-size: 15.500px; color: #555; }
.fdots { width: 37px; height: 32px; display: flex; flex-direction: column; align-items: center; justify-content: center; gap: 3px; }
.fdots i { width: 3px; height: 3px; background: #aaa; }
.fxbox { width: 136px; height: 32px; background: #fff; border: 1px solid #c6c6c6; display: flex; align-items: center; gap: 28px; padding-left: 13px; }
.fxt { font-family: "Liberation Serif", serif; font-style: italic; font-weight: bold; font-size: 18px; color: #777; }
.finput { margin-left: 4px; flex: 1; height: 84px; background: #fff; border: 1px solid #c6c6c6; padding: 1px 0 0 12px; font-size: 15.500px; line-height: 27px; color: #555; position: relative; }
.fup { position: absolute; right: 4px; top: 9px; }

/* main */
.main { height: 710px; flex: none; display: flex; background: #e6e6e6; }
.sheetarea { width: 1635px; flex: none; border-right: 1px solid #c6c6c6; display: flex; flex-direction: column; }
.sheetrow { height: 682px; flex: none; display: flex; }
.sheet { width: 1609px; flex: none; border-right: 1px solid #aaa; border-bottom: 1px solid #aaa; background: #fff; position: relative; overflow: hidden; }
.colhead { height: 23px; display: flex; background: #e6e6e6; border-bottom: 1px solid #a8a8a8; }
.colhead span { width: 80px; flex: none; text-align: center; border-right: 1px solid #c6c6c6; font-size: 16px; line-height: 24px; color: #444; }
.colhead .ca { width: 88px; }
.colhead .cb { width: 129px; }
.colhead .sel { background: #d2d2d2; color: #217346; border-bottom: 2px solid #217346; height: 23px; }
.corner { width: 35px; flex: none; border-right: 1px solid #a8a8a8; position: relative; }
.corner i { position: absolute; right: 3px; bottom: 3px; width: 0; height: 0; border-left: 15px solid transparent; border-bottom: 15px solid #b4b4b4; }
.body { display: flex; height: 658px; }
.rowhead { width: 35px; flex: none; background: #e6e6e6; border-right: 1px solid #a8a8a8; }
.rowhead span { display: block; height: 23px; border-bottom: 1px solid #c6c6c6; text-align: center; font-size: 16px; line-height: 23px; color: #444; }
.rowhead .sel { background: #d2d2d2; color: #217346; box-shadow: inset -2px 0 0 #217346; }
.col { width: 80px; flex: none; border-right: 1px solid #d4d4d4; background: repeating-linear-gradient(to bottom, #fff 0, #fff 22px, #d4d4d4 22px, #d4d4d4 23px); }
.col.ca { width: 88px; }
.col.cb { width: 129px; }
.cell { height: 23px; font-size: 17.500px; line-height: 23px; color: #111; padding: 0 3px 0 3px; margin-right: -1px; display: flex; justify-content: space-between; align-items: flex-start; white-space: nowrap; position: relative; }
.cb .cell { padding-left: 4px; }
.cell.hd { background: #ddebf7; border-bottom: 1px solid #9bc2e6; }
.cell.tot { background: #ddebf7; }
.cell.plain { background: #fff; }
.cell.hd-line { border-bottom: 1px solid #9bc2e6; }
.cell.bold { font-weight: 700; font-size: 17px; letter-spacing: .5px; }
.cell.num { justify-content: flex-end; font-size: 15.500px; line-height: 23px; padding-right: 3px; letter-spacing: 0; }
.cell.tot.num { font-size: 16px; }
.cell:empty { background: transparent; }
.ca .cell:nth-child(2) { margin-right: 0; }
.cb .cell:nth-child(2) { margin-right: 0; }
.cell.active::after { content: ""; position: absolute; left: -1px; top: -1px; right: -1px; bottom: -1px; border: 2px solid #217346; }
.cell.active::before { content: ""; position: absolute; right: -3px; bottom: -3px; background: #217346; border: 1px solid #fff; z-index: 2; box-sizing: content-box; width: 4px; height: 4px; }
.fbtn { width: 21px; height: 21px; background: linear-gradient(#fff, #e8e8e8); border: 1px solid #aaa; display: flex; align-items: center; justify-content: center; margin-top: 1px; margin-right: -3px; flex: none; }
.fbtn i { width: 0; height: 0; border: 4px solid transparent; border-top: 4px solid #666; border-bottom: 0; }

.vscroll { width: 18px; margin-left: 3px; display: flex; flex-direction: column; background: #d8d8d8; }
.sbtn { height: 19px; flex: none; background: #fff; border: 1px solid #d0d0d0; display: flex; align-items: center; justify-content: center; }
.sbtn .up { width: 0; height: 0; border: 5px solid transparent; border-bottom: 5px solid #777; border-top: 0; }
.sbtn .down { width: 0; height: 0; border: 5px solid transparent; border-top: 5px solid #777; border-bottom: 0; }
.vthumb { height: 624px; background: #fff; border: 1px solid #b4b4b4; margin-bottom: 20px; flex: none; }

/* sheet tabs */
.sheettabs { height: 28px; flex: none; display: flex; align-items: flex-start; background: #e6e6e6; }
.navarrows { width: 104px; flex: none; display: flex; gap: 21px; padding: 6px 0 0 27px; }
.stab { width: 82px; height: 25px; flex: none; border-left: 1px solid #aaa; margin-top: 2px; padding-right: 3px; text-align: center; font-size: 17px; line-height: 17px; color: #444; }
.stab.narrow { width: 74px; border-right: 1px solid #aaa; }
.stab.on { background: #fff; color: #217346; border-left: 0; border-bottom: 2px solid #217346; margin-top: 0; height: 26px; line-height: 20px; }
.stab.on + .stab { border-left: 0; }
.addsheet { margin: 4px 0 0 33px; }
.hdots { margin-left: 491px; display: flex; flex-direction: column; gap: 2px; padding-top: 7px; width: 28px; align-items: center; }
.hdots i { width: 2px; height: 2px; background: #999; }
.hscroll { width: 610px; height: 19px; margin-top: 4px; display: flex; background: #d8d8d8; }
.hbtn { width: 18px; flex: none; background: #fff; border: 1px solid #d0d0d0; display: flex; align-items: center; justify-content: center; }
.hbtn .left { width: 0; height: 0; border: 5px solid transparent; border-right: 6px solid #555; border-left: 0; }
.hbtn .right { width: 0; height: 0; border: 5px solid transparent; border-left: 6px solid #555; border-right: 0; }
.hthumb { width: 542px; background: #fff; border: 1px solid #bbb; margin-right: auto; }

/* pane */
.pane { flex: 1; padding: 0 14px; color: #444; font-size: 14px; }
.pane-head { height: 36px; margin: 11px 0 5px; display: flex; align-items: flex-start; }
.pane-head h1 { margin: 0; font-size: 27px; font-weight: 400; line-height: 36px; color: #217346; white-space: nowrap; }
.pcaret { width: 0; height: 0; border: 5px solid transparent; border-top: 6px solid #777; border-bottom: 0; }
.pane-head .pcaret { margin: 9px 0 0 37px; }
.pane-head svg { margin: 7px 0 0 10px; }
.pane-sub { height: 31px; display: flex; align-items: center; justify-content: space-between; margin-bottom: 15px; white-space: nowrap; line-height: 20px; }
.gearbox { width: 51px; height: 31px; border: 1px solid #aaa; display: flex; align-items: center; gap: 9px; padding-left: 10px; }
.psearch { height: 25px; background: #fff; border: 1px solid #aaa; display: flex; align-items: center; justify-content: space-between; padding: 0 1px 0 1px; margin-bottom: 22px; color: #888; line-height: 19px; }
.plist { height: 213px; background: #fdfdfd; }
.pitem { height: 19px; margin-bottom: 6px; display: flex; align-items: center; padding-left: 2px; font-weight: 700; color: #444; gap: 6px; line-height: 19px; }
.chk { width: 16px; height: 16px; border: 1px solid #aaa; background: #fff; display: flex; align-items: center; justify-content: center; flex: none; }
.pmore { margin-top: 13px; padding-left: 2px; line-height: 20px; }
.pdrag { margin: 20px 0 20px 4px; line-height: 20px; white-space: nowrap; }
.zones { display: grid; grid-template-columns: 130px 127px; }
.zone.z-l { border-right: 1px solid #c6c6c6; padding: 0 5px 0 3px; }
.zone { padding-left: 2px; }
.zone.z-t { height: 113px; border-bottom: 1px solid #c6c6c6; }
.zone.z-b { height: 114px; padding-top: 7px; }
.zhead { height: 27px; display: flex; align-items: center; gap: 8px; padding: 0 0 6px 5px; line-height: 20px; font-size: 15px; }
.z-l .zhead { gap: 10px; }
.zbox { height: 80px; background: #fdfdfd; }
.chip { margin: 2px 1px; height: 30px; background: #fff; border: 1px solid #aaa; display: flex; align-items: center; justify-content: space-between; padding: 0 10px 0 8px; font-size: 15px; color: #444; white-space: nowrap; line-height: 20px; }
.chip i { width: 0; height: 0; border: 5px solid transparent; border-top: 5px solid #000; border-bottom: 0; flex: none; }
.pfoot { display: flex; align-items: center; height: 32px; margin-top: 22px; padding-left: 3px; font-size: 15px; }
.big-chk { background: #fff; }
.defer { margin-left: 7px; white-space: nowrap; line-height: 20px; }
.update { margin-left: auto; margin-right: 1px; width: 44px; height: 32px; background: #f3f3f3; color: #aaa; text-align: center; line-height: 32px; }

/* status */
.statusbar { height: 27px; flex: none; background: #f1f1f1; border-top: 1px solid #c6c6c6; display: flex; align-items: stretch; color: #666; font-size: 15px; }
.ready { margin-left: 8px; line-height: 26px; white-space: nowrap; }
.macro { margin: 6px 0 0 19px; }
.views { margin-left: 1501px; display: flex; }
.vbtn { width: 41px; display: flex; align-items: center; justify-content: center; }
.vbtn.on { background: #c6c6c6; }
.zoomer { margin-left: 7px; width: 154px; display: flex; align-items: center; gap: 3px; }
.zm { width: 9px; height: 2px; background: #666; flex: none; }
.ztrack { width: 123px; height: 1px; background: #999; position: relative; flex: none; }
.ztrack i { position: absolute; left: 60px; top: -6px; width: 4px; height: 13px; background: #666; }
.zp { width: 11px; height: 11px; flex: none; margin-left: 3px; background: linear-gradient(#666, #666) center / 11px 2px no-repeat, linear-gradient(#666, #666) center / 2px 11px no-repeat; }
.zpct { margin-left: 17px; line-height: 26px; white-space: nowrap; }

/* taskbar */
.taskbar { height: 50px; flex: none; background: #d0d0d0; display: flex; align-items: center; position: relative; }
.tb-item { display: flex; align-items: center; justify-content: center; height: 50px; flex: none; }
.tb-item.w60 { width: 60px; } .tb-item.w62 { width: 62px; } .tb-item.w58 { width: 58px; }
.tb-search { width: 275px; height: 43px; margin-top: -1px; background: #ededed; display: flex; align-items: center; padding-left: 9px; flex: none; }
.tri { width: 0; height: 0; border: 3px solid transparent; border-bottom: 5px solid #999; border-top: 0; margin-left: 4px; }
.news { margin-left: 7px; font-size: 16px; color: #111; white-space: nowrap; line-height: 20px; width: 157px; }
.go { margin-left: auto; width: 70px; height: 43px; background: #2a8cff; color: #fff; text-align: center; line-height: 41px; font-size: 15px; white-space: nowrap; }
.tb-bars { width: 25px; display: flex; gap: 2px; padding-left: 9px; flex: none; }
.tb-bars i { width: 1px; height: 36px; background: #333; }
.app-ic { width: 61.500px; }
.app-ic.cur { background: #ebebeb; }
.scis { margin-left: 3px; }
.xlic { margin-left: 3px; }
.tb-underlines { position: absolute; left: 0; bottom: 0; width: 800px; height: 3px; }
.tb-underlines i { position: absolute; top: 0; height: 3px; background: #0a6ec7; }
.tb-underlines .u1b, .tb-underlines .u2b { background: #6aace6; }
.u1 { left: 548px; width: 41px; }
.u1b { left: 589px; width: 10px; }
.u2 { left: 610px; width: 41px; }
.u2b { left: 651px; width: 10px; }
.u3 { left: 672px; width: 51px; }
.u4 { left: 729px; width: 61px; }
.tray { margin-left: auto; display: flex; align-items: center; padding-right: 11px; height: 50px; }
.tray > span { display: flex; align-items: center; justify-content: center; flex: none; height: 50px; }
.t44 { width: 44px; } .t22 { width: 22px; } .t34 { width: 34px; } .t30 { width: 30px; } .t24 { width: 24px; } .t6 { width: 6px; } .t36 { width: 36px; } .t32 { width: 32px; } .t40 { width: 40px; } .t58 { width: 58px; }
.ime { font-size: 20px; color: #fff; -webkit-text-stroke: .6px #111; line-height: 20px; }
.tray .clock { display: block; width: 98px; padding: 4px 0 0 9px; height: 50px; font-size: 15.500px; letter-spacing: .25px; line-height: 21px; color: #111; white-space: nowrap; }
.vid { position: relative; }
.vid b { position: absolute; left: 24px; top: 24px; width: 16px; height: 16px; background: #d8000c; color: #fff; font-size: 11px; font-weight: 400; line-height: 16px; text-align: center; border-radius: 2px; }

/* dialog */
.dialog { position: absolute; left: 1003px; top: 406px; width: 379px; height: 300px; background: #efefef; border: 1px solid #707070; box-shadow: 2px 3px 12px rgba(0,0,0,.25); color: #111; font-size: 15px; line-height: 20px; }
.dlg-title { height: 37px; background: #fff; display: flex; align-items: center; padding: 0 0 4px 9px; }
.dlg-title .q { margin-left: 172px; font-size: 16px; }
.dlg-title svg { margin-left: 46px; }
.dlg-body { padding: 9px 0 0 8px; }
.dlg-label { white-space: nowrap; }
.listbox { margin-top: 5px; width: 361px; height: 164px; background: #fff; border: 1px solid #828790; display: flex; padding: 1px; }
.lb-items { flex: 1; }
.lb-sel { height: 20px; margin-right: 1px; background: #0078d7; color: #fff; padding-left: 2px; line-height: 19px; outline: 1px dotted #e08a2a; outline-offset: -1px; }
.lb-scroll { width: 21px; background: #f0f0f0; display: flex; flex-direction: column; align-items: center; justify-content: space-between; padding: 9px 0 9px; }
.dlg-btns { margin: 18px 1px 0 0; width: 361px; display: flex; justify-content: flex-end; gap: 13px; padding-right: 1px; }
.btn { width: 99px; height: 34px; background: #e1e1e1; border: 1px solid #adadad; text-align: center; line-height: 32px; }
.btn.primary { background: #e5f1fb; border-color: #0078d7; }

/* meter */
.meter { position: absolute; left: 1463px; top: 869px; width: 184px; height: 88px; }
.m-ring { position: absolute; left: 0; top: 0; width: 84px; height: 86px; }
.m-face { position: absolute; left: 10px; top: 11px; width: 62px; height: 62px; border-radius: 50%; background: #f4f4f4; color: #555; font-family: "Inter", sans-serif; font-weight: 300; font-size: 27px; letter-spacing: -1px; line-height: 62px; text-align: center; }
.m-face small { font-size: 14px; font-weight: 400; letter-spacing: 0; }
.m-pill { position: absolute; left: 50px; top: 20px; width: 133px; height: 49px; border-radius: 25px; background: linear-gradient(#fbfbfb, #ededed); box-shadow: 0 2px 5px rgba(0,0,0,.18); display: flex; align-items: center; padding-left: 36px; }
.m-info { width: 68px; flex: none; }
.m-net { display: flex; align-items: center; gap: 12px; font-size: 11px; color: #111; line-height: 20px; white-space: nowrap; }
.m-cpu { font-size: 12px; color: #666; line-height: 20px; margin-top: 3px; white-space: nowrap; }
.m-cpu em { font-style: normal; color: #22d46f; }
.m-plus { width: 20px; height: 20px; border-radius: 50%; background: #2f8ff0; display: flex; align-items: center; justify-content: center; margin-left: 0; flex: none; }
.xl { font-family: "Liberation Sans", sans-serif; font-weight: 700; font-size: 13px; fill: #fff; }
```
